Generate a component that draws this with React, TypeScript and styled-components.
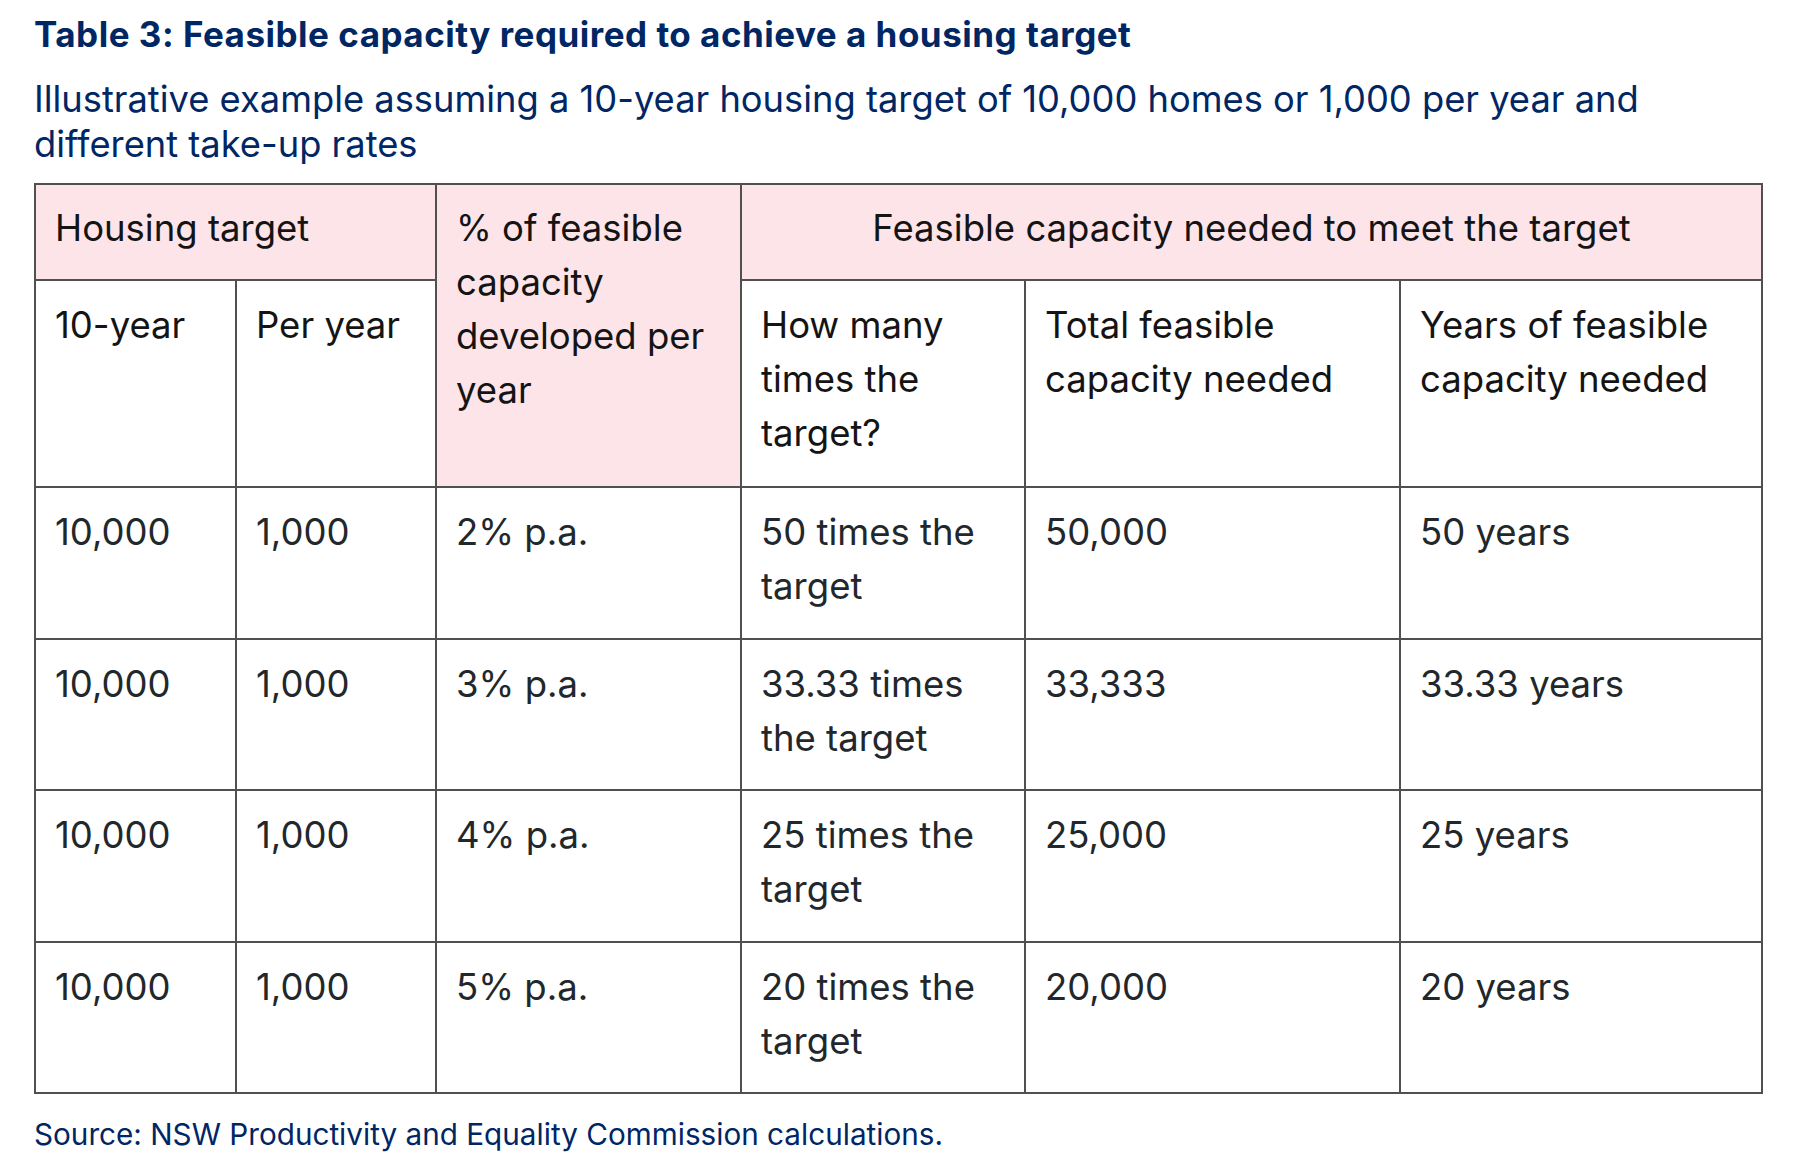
import React from "react";
import styled, { createGlobalStyle } from "styled-components";

const GlobalStyle = createGlobalStyle`
  html, body {
    margin: 0;
    padding: 0;
    background: #ffffff;
  }
  body {
    font-family: Inter, "Open Sans", "Liberation Sans", sans-serif;
  }
`;

type Row = {
  tenYear: string;
  perYear: string;
  rate: string;
  times: string;
  total: string;
  years: string;
};

const rows: Row[] = [
  { tenYear: "10,000", perYear: "1,000", rate: "2% p.a.", times: "50 times the target", total: "50,000", years: "50 years" },
  { tenYear: "10,000", perYear: "1,000", rate: "3% p.a.", times: "33.33 times the target", total: "33,333", years: "33.33 years" },
  { tenYear: "10,000", perYear: "1,000", rate: "4% p.a.", times: "25 times the target", total: "25,000", years: "25 years" },
  { tenYear: "10,000", perYear: "1,000", rate: "5% p.a.", times: "20 times the target", total: "20,000", years: "20 years" },
];

const colWidths = [201, 200, 305, 284, 375, 362];

const App = () => {
  return (
    <Page>
      <GlobalStyle />
      <Title>Table 3: Feasible capacity required to achieve a housing target</Title>
      <Subtitle>
        Illustrative example assuming a 10-year housing target of 10,000 homes or 1,000 per year and
        different take-up rates
      </Subtitle>
      <Table>
        <colgroup>
          {colWidths.map((w, i) => (
            <col key={i} style={{ width: w }} />
          ))}
        </colgroup>
        <thead>
          <tr>
            <HeadCell colSpan={2} $pink $top>
              Housing target
            </HeadCell>
            <HeadCell rowSpan={2} $pink $top>
              % of feasible capacity developed per year
            </HeadCell>
            <HeadCell colSpan={3} $pink $top $center>
              Feasible capacity needed to meet the target
            </HeadCell>
          </tr>
          <tr>
            <HeadCell>10-year</HeadCell>
            <HeadCell>Per year</HeadCell>
            <HeadCell>How many times the target?</HeadCell>
            <HeadCell>Total feasible capacity needed</HeadCell>
            <HeadCell>Years of feasible capacity needed</HeadCell>
          </tr>
        </thead>
        <tbody>
          {rows.map((r, i) => (
            <tr key={i}>
              <DataCell>{r.tenYear}</DataCell>
              <DataCell>{r.perYear}</DataCell>
              <DataCell>{r.rate}</DataCell>
              <DataCell>{r.times}</DataCell>
              <DataCell>{r.total}</DataCell>
              <DataCell>{r.years}</DataCell>
            </tr>
          ))}
        </tbody>
      </Table>
      <Source>Source: NSW Productivity and Equality Commission calculations.</Source>
    </Page>
  );
};

const Page = styled.div`
  padding: 14px 34px 40px 34px;
  width: 1727px;
`;

const Title = styled.h2`
  margin: 0;
  font-size: 35px;
  line-height: 40px;
  letter-spacing: 0.5px;
  font-weight: 700;
  color: #002664;
`;

const Subtitle = styled.p`
  margin: 23px 0 0 0;
  font-size: 36.3px;
  line-height: 45px;
  font-weight: 400;
  color: #002664;
`;

const Table = styled.table`
  margin-top: 16px;
  width: 1727px;
  table-layout: fixed;
  border-collapse: collapse;
  font-size: 36.5px;
  line-height: 54px;
`;

const HeadCell = styled.th<{ $pink?: boolean; $top?: boolean; $center?: boolean }>`
  border: 2px solid #505050;
  background: ${(p) => (p.$pink ? "#fde4e9" : "#ffffff")};
  color: #141414;
  font-weight: 400;
  text-align: ${(p) => (p.$center ? "center" : "left")};
  vertical-align: top;
  padding: ${(p) => (p.$top ? "16px 19px 24px 19px" : "17px 19px 24px 19px")};
  height: ${(p) => (p.$top ? "54px" : "164px")};
`;

const DataCell = styled.td`
  border: 2px solid #505050;
  color: #22272c;
  vertical-align: top;
  padding: 17px 19px 24.5px 19px;
  height: 108px;
`;

const Source = styled.p`
  margin: 22px 0 0 0;
  font-size: 29.7px;
  line-height: 36px;
  color: #002664;
`;

export default App;
